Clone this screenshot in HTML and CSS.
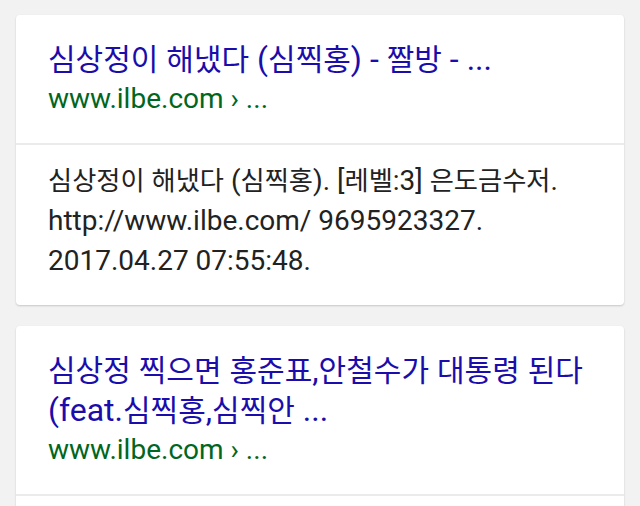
FILE: index.html
```
<!DOCTYPE html>
<html lang="ko">
<head>
<meta charset="utf-8">
<link rel="stylesheet" href="styles.css">
</head>
<body>
<div class="results">
  <div class="card">
    <div class="head">
      <div class="title"><span class="ko">심상정이</span> <span class="ko">해냈다</span> (<span class="ko">심찍홍</span>) - <span class="ko">짤방</span> - ...</div>
      <div class="url">www.ilbe.com › ...</div>
    </div>
    <div class="snippet"><span class="ko">심상정이</span> <span class="ko">해냈다</span> (<span class="ko">심찍홍</span>). [<span class="ko">레벨</span>:3] <span class="ko">은도금수저</span>.<br>http://www.ilbe.com/ 9695923327.<br>2017.04.27 07:55:48.</div>
  </div>
  <div class="card">
    <div class="head">
      <div class="title"><span class="ko">심상정</span> <span class="ko">찍으면</span> <span class="ko">홍준표</span>,<span class="ko">안철수가</span> <span class="ko">대통령</span> <span class="ko">된다</span><br>(feat.<span class="ko">심찍홍</span>,<span class="ko">심찍안</span> ...</div>
      <div class="url">www.ilbe.com › ...</div>
    </div>
    <div class="snippet snippet-empty"></div>
  </div>
</div>
</body>
</html>
```
FILE: styles.css
```
html, body {
  margin: 0;
  padding: 0;
  background: #f2f2f2;
}
body {
  font-family: Roboto, "Noto Sans CJK KR", sans-serif;
  height: 506px;
  overflow: hidden;
}
.results {
  display: flex;
  flex-direction: column;
  gap: 21px;
  padding: 15px 16px 0;
}
.card {
  background: #fff;
  border-radius: 4px;
  box-shadow: 0 1px 2px rgba(0, 0, 0, 0.18);
}
.head {
  padding: 24px 32px;
  border-bottom: 2px solid #ebebeb;
}
.title {
  font-size: 32px;
  line-height: 40px;
  color: #1a0dab;
}
.title .ko {
  font-size: 30px;
}
.url {
  font-size: 28px;
  line-height: 40px;
  color: #006621;
}
.snippet {
  padding: 16px 32px 24px;
  font-size: 28px;
  line-height: 40px;
  color: #222;
}
.snippet-empty {
  min-height: 40px;
}
.snippet .ko {
  font-size: 26.25px;
}
.ko {
  font-family: "Noto Sans CJK KR", sans-serif;
  line-height: 0;
}
```
